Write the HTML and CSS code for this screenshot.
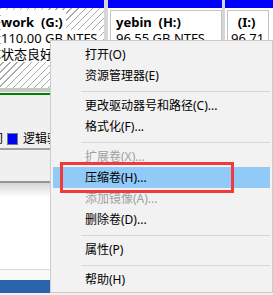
FILE: index.html
```html
<!DOCTYPE html>
<html lang="zh-CN">

<head>
    <meta charset="UTF-8">
    <meta name="viewport" content="width=device-width, initial-scale=1.0">
    <title>磁盘管理</title>
    <link rel="stylesheet" href="styles.css">
</head>

<body>
    <div class="parts">
        <div class="part part-g">
            <div class="bar"></div>
            <div class="hatch">
                <span class="line name">work&nbsp;&nbsp;(G:)</span>
                <span class="line">110.00 GB NTFS</span>
                <span class="line">状态良好</span>
            </div>
        </div>
        <div class="part part-h">
            <div class="bar"></div>
            <div class="body">
                <div class="box">
                    <div class="name">yebin&nbsp;&nbsp;(H:)</div>
                    <div>96.55 GB NTFS</div>
                </div>
            </div>
        </div>
        <div class="part part-i">
            <div class="bar"></div>
            <div class="body">
                <div class="box">
                    <div class="name">&nbsp;&nbsp;(I:)</div>
                    <div>96.71 GB NTFS</div>
                </div>
            </div>
        </div>
    </div>
    <div class="ext"></div>

    <div class="legend">
        <span class="legend-text clip">可用空间</span>
        <span class="swatch"></span>
        <span class="legend-text">逻辑驱动器</span>
    </div>
    <div class="pane"></div>
    <div class="list"></div>
    <div class="foot"></div>
    <div class="taskbar"></div>

    <!-- 右键菜单 -->
    <div class="menu">
        <div class="item">打开(O)</div>
        <div class="item">资源管理器(E)</div>
        <div class="sep"></div>
        <div class="item">更改驱动器号和路径(C)...</div>
        <div class="item">格式化(F)...</div>
        <div class="sep"></div>
        <div class="item disabled">扩展卷(X)...</div>
        <div class="item active">压缩卷(H)...</div>
        <div class="item disabled">添加镜像(A)...</div>
        <div class="item">删除卷(D)...</div>
        <div class="sep"></div>
        <div class="item">属性(P)</div>
        <div class="sep"></div>
        <div class="item">帮助(H)</div>
    </div>

    <div class="mark"></div>
</body>

</html>
```

FILE: styles.css
```css
body {
    margin: 0;
    width: 273px;
    height: 295px;
    overflow: hidden;
    position: relative;
    background: #f0f0f0;
    font-family: "Noto Sans", "Noto Sans CJK SC", sans-serif;
    color: #000;
}

.parts {
    display: flex;
    height: 88px;
    background: #d6d6d6;
}

.part {
    display: flex;
    flex-direction: column;
    overflow: hidden;
}

.part-g {
    width: 104px;
}

.part-h {
    width: 114px;
    margin-left: 4px;
}

.part-i {
    flex: 1;
    margin-left: 3px;
}

.bar {
    height: 8px;
    background: #0000ff;
}

.hatch {
    flex: 1;
    padding: 2px 0 0 1px;
    display: flex;
    flex-direction: column;
    align-items: flex-start;
    font-size: 13px;
    background: repeating-linear-gradient(-45deg, #ffffff 0 4px, #a9a9a9 4px 5px);
}

.line {
    display: inline-block;
    line-height: 16px;
    background: #fff;
    padding-right: 3px;
    white-space: nowrap;
}

.hatch .line:first-child {
    padding-top: 4px;
}

.name {
    font-weight: bold;
}

.body {
    flex: 1;
    padding: 2px 0 0 2px;
    background: #fff;
}

.box {
    height: 100%;
    box-sizing: border-box;
    border: 1px solid #c3c3c3;
    padding: 3px 0 0 5px;
    font-size: 13px;
    line-height: 16px;
    white-space: nowrap;
    overflow: hidden;
    background: #fff;
}

.part-i .box {
    padding-left: 3px;
    margin-right: 4px;
}

.ext {
    height: 1px;
    border-top: 4px solid #c6c6c6;
    border-bottom: 2px solid #008000;
    background: #f4f4f4;
}

.legend {
    height: 55px;
    box-sizing: border-box;
    padding-top: 36px;
    display: flex;
    align-items: flex-start;
    border-bottom: 2px solid #a2a2a2;
    white-space: nowrap;
}

.legend-text {
    font-size: 12px;
    line-height: 16px;
}

.clip {
    margin-left: -45px;
}

.swatch {
    width: 9px;
    height: 10px;
    margin: 2px 5px 0 4px;
    background: #0000ff;
    border: 1px solid #7a7a7a;
}

.pane {
    height: 31px;
}

.list {
    height: 86px;
    border-top: 2px solid #959595;
    background: linear-gradient(#d5d5d5, #ffffff 14px);
}

.foot {
    height: 10px;
    border-top: 1px solid #dadada;
    background: #f9f9f9;
}

.taskbar {
    height: 13px;
    background: #2a65ac;
}

.menu {
    position: absolute;
    left: 50px;
    top: 40px;
    width: 223px;
    box-sizing: border-box;
    border: 1px solid #cccccc;
    background: #f2f2f2;
    padding: 3px 2px 2px;
    font-size: 12px;
}

.item {
    height: 21px;
    line-height: 21px;
    padding-left: 32px;
    white-space: nowrap;
}

.item.disabled {
    color: #a0a0a0;
}

.item.active {
    background: #91c9f7;
}

.sep {
    height: 1px;
    margin: 5px 0 3px 28px;
    background: #d7d7d7;
}

.mark {
    position: absolute;
    left: 60px;
    top: 162px;
    width: 174px;
    height: 31px;
    box-sizing: border-box;
    border: 3px solid #f03a3c;
}
```
